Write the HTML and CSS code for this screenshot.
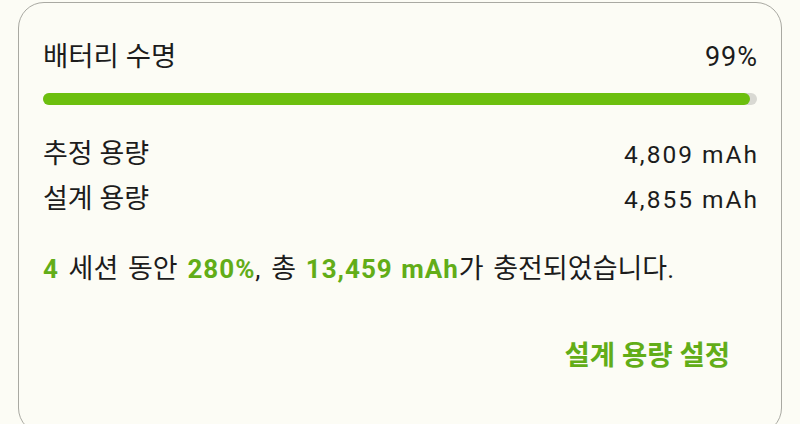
FILE: index.html
```html
<!DOCTYPE html>
<html lang="ko">
<head>
<meta charset="utf-8">
<link rel="stylesheet" href="styles.css">
</head>
<body>
<div class="card">
  <div class="row title">
    <span class="label">배터리 수명</span>
    <span class="value">99%</span>
  </div>
  <div class="bar"><div class="fill" style="width: 99%"></div></div>
  <div class="rows">
    <div class="row">
      <span class="label">추정 용량</span>
      <span class="value">4,809 mAh</span>
    </div>
    <div class="row">
      <span class="label">설계 용량</span>
      <span class="value">4,855 mAh</span>
    </div>
  </div>
  <p class="summary"><b>4</b> 세션 동안 <b>280%</b><span class="num">,</span> 총 <b>13,459 mAh</b>가 충전되었습니다<span class="num">.</span></p>
  <div class="actions"><span class="btn">설계 용량 설정</span></div>
</div>
</body>
</html>
```
FILE: styles.css
```css
html, body {
  margin: 0;
  background: #fcfcf5;
}
body {
  font-family: Roboto, "Noto Sans CJK KR", sans-serif;
  color: #1c1c1c;
  height: 424px;
  overflow: hidden;
}
.card {
  box-sizing: border-box;
  margin: 2px 0 0 18px;
  width: 764px;
  height: 432px;
  border: 1.5px solid #a9a9a2;
  border-radius: 26px;
  padding: 36px 24px 0 24px;
  display: flex;
  flex-direction: column;
}
.row {
  display: flex;
  justify-content: space-between;
  align-items: center;
  line-height: 45px;
}
.label {
  font-size: 27px;
}
.title {
  line-height: 36px;
}
.title .label {
  font-size: 27.5px;
}
.value {
  font-size: 24.5px;
  letter-spacing: 2px;
  margin-right: -2px;
}
.title .value {
  font-size: 27px;
  letter-spacing: 1px;
  margin-right: -1px;
}
.bar {
  margin-top: 18px;
  height: 12px;
  border-radius: 6px;
  background: #d9d9d3;
}
.fill {
  height: 100%;
  border-radius: 6px;
  background: #6cbf0e;
}
.rows {
  margin-top: 27px;
}
.summary {
  margin: 28px 0 0 0;
  font-size: 27px;
  line-height: 38px;
  word-spacing: 3px;
}
.summary b,
.summary .num {
  font-size: 26px;
  letter-spacing: 1px;
  word-spacing: 1px;
}
.summary b {
  color: #62ad18;
  font-weight: 700;
}
.actions {
  display: flex;
  justify-content: flex-end;
  margin-top: 49px;
  padding-right: 27px;
}
.btn {
  font-size: 27.5px;
  font-weight: 700;
  color: #62ad18;
  line-height: 38px;
}
```
